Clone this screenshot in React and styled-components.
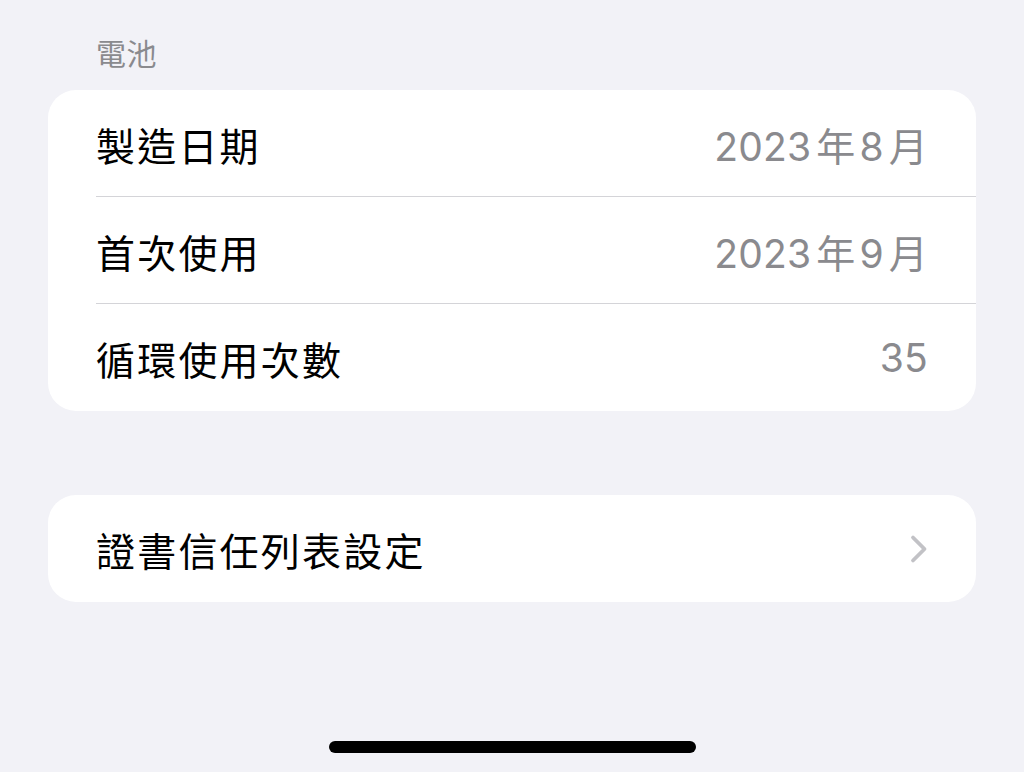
import React from "react";
import styled, { createGlobalStyle } from "styled-components";

const Global = createGlobalStyle`
  html, body {
    margin: 0;
    padding: 0;
    background: #f2f2f7;
  }
  body {
    font-family: Inter, "Noto Sans CJK TC", sans-serif;
    -webkit-font-smoothing: antialiased;
  }
`;

const Screen = styled.div`
  width: 1024px;
  height: 772px;
  background: #f2f2f7;
  display: flex;
  flex-direction: column;
  padding: 0 48px;
  box-sizing: border-box;
  overflow: hidden;
`;

const SectionHeader = styled.div`
  font-size: 30px;
  line-height: 34px;
  color: #8a8a8e;
  padding: 37px 48px 19px;
  letter-spacing: 0.5px;
`;

const Group = styled.div`
  background: #ffffff;
  border-radius: 28px;
  overflow: hidden;
  margin-top: ${(p) => p.$gap || 0}px;
`;

const Row = styled.div`
  display: flex;
  align-items: center;
  height: 107px;
  padding: 0 48px;
  position: relative;
  &:not(:last-child)::after {
    content: "";
    position: absolute;
    left: 48px;
    right: 0;
    bottom: 0;
    height: 1px;
    background: #d4d4d8;
  }
`;

const Label = styled.div`
  flex: 1;
  font-size: 39px;
  color: #000;
  letter-spacing: 2.2px;
`;

const Value = styled.div`
  font-size: 39px;
  color: #8a8a8e;
  letter-spacing: 0.2px;
  display: flex;
  align-items: baseline;
`;

const Unit = styled.span`
  margin: 0 4px 0 5px;
  &:last-child {
    margin-right: 0;
  }
`;

const Chevron = styled.svg`
  width: 20px;
  height: 30px;
  margin-right: -1px;
`;

const Spacer = styled.div`
  flex: 1;
`;

const HomeBar = styled.div`
  align-self: center;
  width: 367px;
  height: 12px;
  border-radius: 6px;
  background: #000;
  margin-bottom: 19px;
`;

const rows = [
  { label: "製造日期", value: ["2023", "年", "8", "月"] },
  { label: "首次使用", value: ["2023", "年", "9", "月"] },
  { label: "循環使用次數", value: ["35"] },
];

export default function App() {
  return (
    <>
      <Global />
      <Screen>
        <SectionHeader>電池</SectionHeader>
        <Group>
          {rows.map((r) => (
            <Row key={r.label}>
              <Label>{r.label}</Label>
              <Value>
                {r.value.map((part, i) =>
                  i % 2 === 1 ? <Unit key={i}>{part}</Unit> : <span key={i}>{part}</span>
                )}
              </Value>
            </Row>
          ))}
        </Group>
        <Group $gap={84}>
          <Row>
            <Label>證書信任列表設定</Label>
            <Chevron viewBox="0 0 20 30">
              <path
                d="M4 3.5 L15.5 15 L4 26.5"
                fill="none"
                stroke="#c2c2c6"
                strokeWidth="3.8"
                strokeLinecap="round"
                strokeLinejoin="round"
              />
            </Chevron>
          </Row>
        </Group>
        <Spacer />
        <HomeBar />
      </Screen>
    </>
  );
}
